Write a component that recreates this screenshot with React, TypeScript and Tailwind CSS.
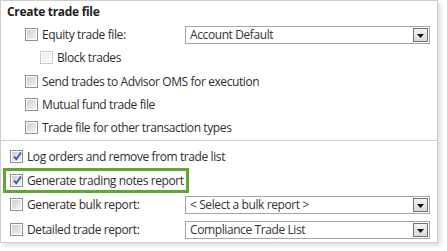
const font = { fontFamily: '"Open Sans", "Noto Sans", sans-serif' };

function Check({ checked = false, disabled = false }: { checked?: boolean; disabled?: boolean }) {
  return (
    <span
      className={
        "relative flex h-[13px] w-[13px] shrink-0 items-center justify-center border " +
        (disabled ? "border-[#cacaca] bg-white" : "border-[#8e8f8f] bg-white")
      }
    >
      <span
        className={
          "block h-[9px] w-[9px] " +
          (disabled
            ? "bg-gradient-to-br from-[#ececec] to-[#fafafa]"
            : "bg-gradient-to-br from-[#cfcfcf] to-[#f3f3f3]")
        }
      />
      {checked && (
        <svg className="absolute left-[1px] top-[0px]" width="11" height="11" viewBox="0 0 11 11">
          <path d="M2 5.5 L4.3 8.3 L9 1.5" stroke="#3a56a8" strokeWidth="1.8" fill="none" strokeLinejoin="round" />
        </svg>
      )}
    </span>
  );
}

function Select({ value }: { value: string }) {
  return (
    <div className="flex h-[18px] w-[245px] items-center justify-between border border-[#a5a5a5] bg-white pl-[4px] pr-[1px]">
      <span className="text-[12px] leading-none tracking-[-0.4px] text-[#333]">{value}</span>
      <span className="flex h-[14px] w-[15px] items-end justify-center border border-[#707070] bg-gradient-to-b from-[#f2f2f2] to-[#d9d9d9] pb-[3px]">
        <svg width="7" height="4" viewBox="0 0 7 4">
          <path d="M0 0 H7 L3.5 4 Z" fill="#111" />
        </svg>
      </span>
    </div>
  );
}

function Row({
  label,
  checked,
  disabled,
  indent,
  select,
  className = "",
}: {
  label: string;
  checked?: boolean;
  disabled?: boolean;
  indent: string;
  select?: string;
  className?: string;
}) {
  return (
    <div className={"flex h-[23px] items-center " + indent + " " + className}>
      <Check checked={checked} disabled={disabled} />
      <span className="ml-[4px] w-[143px] shrink-0 whitespace-nowrap text-[12px] tracking-[-0.4px] text-[#2e2e2e]">{label}</span>
      {select && <Select value={select} />}
    </div>
  );
}

export default function App() {
  return (
    <div className="h-[251px] w-[447px] bg-white" style={font}>
      <div className="h-[243px] w-[438px] border border-[#cdcdcd] bg-white shadow-[3px_3px_4px_rgba(0,0,0,0.12)]">
        <div className="flex h-[22px] items-center pl-[6px] text-[12px] font-bold tracking-[-0.3px] text-[#1e1e1e]">
          Create trade file
        </div>
        <Row indent="pl-[24px]" label="Equity trade file:" select="Account Default" />
        <Row indent="pl-[39px]" label="Block trades" disabled />
        <Row indent="pl-[24px]" className="mt-[1px]" label="Send trades to Advisor OMS for execution" />
        <Row indent="pl-[24px]" label="Mutual fund trade file" />
        <Row indent="pl-[24px]" label="Trade file for other transaction types" />
        <div className="mt-[1px] h-px bg-[#cfcfcf]" />
        <Row indent="pl-[9px]" className="mt-[4px] h-[22px]" label="Log orders and remove from trade list" checked />
        <div className="ml-[2px] flex h-[25px] w-[186px] items-center border-[3px] border-[#62a531] pl-[4px]">
          <Check checked />
          <span className="ml-[4px] whitespace-nowrap text-[12px] tracking-[-0.4px] text-[#2e2e2e]">Generate trading notes report</span>
        </div>
        <Row indent="pl-[9px]" label="Generate bulk report:" select="< Select a bulk report >" className="[&>span:nth-child(2)]:w-[158px]" />
        <Row indent="pl-[9px]" className="mt-[2px] [&>span:nth-child(2)]:w-[158px]" label="Detailed trade report:" select="Compliance Trade List" />
      </div>
    </div>
  );
}
